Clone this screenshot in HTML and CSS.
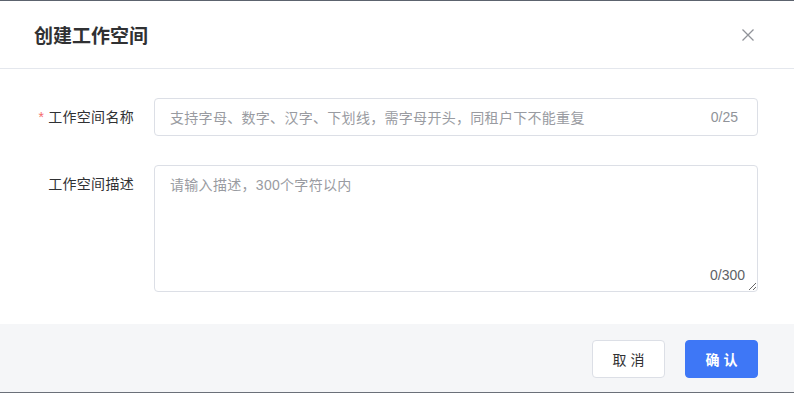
FILE: index.html
```html
<!DOCTYPE html>
<html lang="zh">
<head>
<meta charset="utf-8">
<title>创建工作空间</title>
<link rel="stylesheet" href="styles.css">
</head>
<body>
<div class="topline"></div>
<div class="dialog">
  <div class="header">
    <div class="title">创建工作空间</div>
    <svg class="close" width="12" height="12" viewBox="0 0 12 12"><path d="M0.5 0.5 L11.5 11.5 M11.5 0.5 L0.5 11.5" stroke="#909399" stroke-width="1.3" fill="none"/></svg>
  </div>
  <div class="form">
    <div class="label"><span class="req">*</span>工作空间名称</div>
    <div class="field input">
      <span class="ph">支持字母、数字、汉字、下划线，需字母开头，同租户下不能重复</span>
      <span class="count">0/25</span>
    </div>
    <div class="label">工作空间描述</div>
    <div class="field area">
      <textarea class="ta" placeholder="请输入描述，300个字符以内"></textarea>
      <span class="count2">0/300</span>
    </div>
  </div>
  <div class="footer">
    <button class="btn cancel">取 消</button>
    <button class="btn ok">确 认</button>
  </div>
</div>
<div class="bottomline"></div>
</body>
</html>
```
FILE: styles.css
```css
html, body {
  margin: 0;
  padding: 0;
  background: #fff;
  font-family: "Liberation Sans", "Noto Sans CJK SC", sans-serif;
  color: #303133;
}
.topline {
  height: 1px;
  background: #5c636e;
}
.bottomline {
  height: 1px;
  background: #6b7079;
}
.dialog {
  width: 794px;
}
.header {
  height: 67px;
  border-bottom: 1px solid #e4e7ed;
  display: flex;
  align-items: center;
  justify-content: space-between;
  padding: 0 40px 0 34px;
}
.title {
  font-size: 19px;
  font-weight: bold;
  color: #303133;
}
.close {
  display: block;
}
.form {
  display: grid;
  grid-template-columns: 134px 604px;
  column-gap: 20px;
  row-gap: 29px;
  padding: 29px 0 32px 0;
}
.label {
  text-align: right;
  font-size: 14px;
  letter-spacing: 0.3px;
  color: #303133;
  line-height: 38px;
}
.req {
  color: #f56c6c;
  margin-right: 4px;
}
.field {
  box-sizing: border-box;
  border: 1px solid #dcdfe6;
  border-radius: 4px;
  background: #fff;
}
.input {
  height: 38px;
  display: flex;
  align-items: center;
  justify-content: space-between;
  padding: 0 19px 0 15px;
  font-size: 14px;
}
.ph {
  color: #999ba1;
  letter-spacing: 0.3px;
}
.count {
  color: #909399;
}
.area {
  height: 127px;
  position: relative;
}
.ta {
  display: block;
  box-sizing: border-box;
  width: 100%;
  height: 100%;
  border: none;
  outline: none;
  border-radius: 4px;
  padding: 9px 15px;
  font-family: "Liberation Sans", "Noto Sans CJK SC", sans-serif;
  font-size: 14px;
  line-height: 20px;
  letter-spacing: 0.3px;
  color: #303133;
  background: transparent;
  resize: vertical;
}
.ta::placeholder {
  color: #999ba1;
}
.count2 {
  position: absolute;
  right: 12px;
  bottom: 8px;
  font-size: 14px;
  color: #606266;
}
.footer {
  height: 68px;
  box-sizing: border-box;
  background: #f5f6f8;
  display: flex;
  justify-content: flex-end;
  align-items: flex-start;
  gap: 20px;
  padding: 16px 36px 0 0;
}
.btn {
  width: 73px;
  height: 38px;
  box-sizing: border-box;
  border-radius: 4px;
  font-family: "Liberation Sans", "Noto Sans CJK SC", sans-serif;
  font-size: 14px;
  cursor: pointer;
  padding: 0;
}
.cancel {
  background: #fff;
  border: 1px solid #dcdfe6;
  color: #303133;
}
.ok {
  background: #3e77f6;
  border: 1px solid #3e77f6;
  color: #fff;
  font-weight: bold;
}
```
